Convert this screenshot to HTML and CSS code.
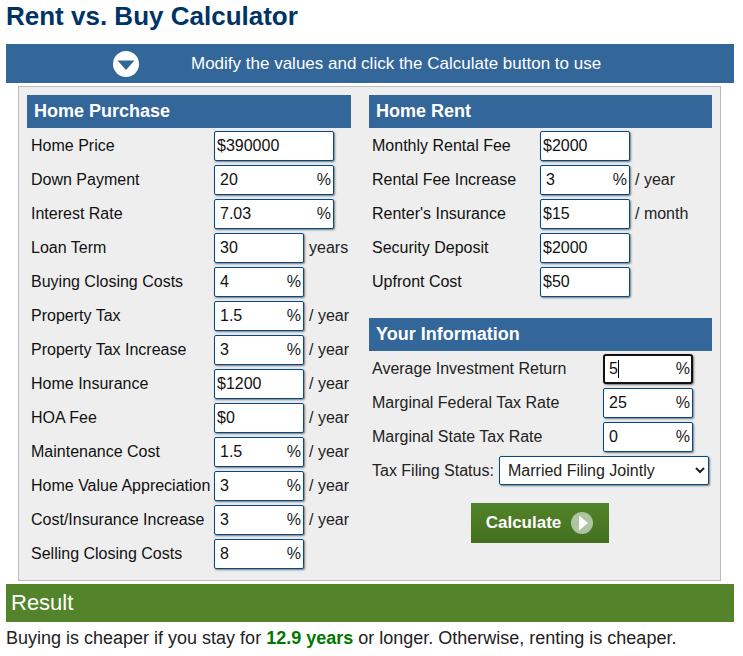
FILE: index.html
```html
<!DOCTYPE html>
<html lang="en">
<head>
<meta charset="utf-8">
<title>Rent vs. Buy Calculator</title>
<link rel="stylesheet" href="styles.css">
</head>
<body>
<h1 class="title">Rent vs. Buy Calculator</h1>
<div class="banner">
  <svg class="banner-icon" width="28" height="28" viewBox="0 0 28 28"><circle cx="14" cy="14" r="13" fill="#fff"/><path d="M5.5 10.5h17L14 20z" fill="#336699"/></svg>
  <span>Modify the values and click the Calculate button to use</span>
</div>
<form class="panel">
  <div class="col col-left">
    <h2 class="sec">Home Purchase</h2>
    <div class="row"><label class="lbl">Home Price</label><span class="field w120"><input value="$390000"></span></div>
    <div class="row"><label class="lbl">Down Payment</label><span class="field w120 pct"><input value="20"><i>%</i></span></div>
    <div class="row"><label class="lbl">Interest Rate</label><span class="field w120 pct"><input value="7.03"><i>%</i></span></div>
    <div class="row"><label class="lbl">Loan Term</label><span class="field w90 pct"><input value="30"></span><span class="unit">years</span></div>
    <div class="row"><label class="lbl">Buying Closing Costs</label><span class="field w90 pct"><input value="4"><i>%</i></span></div>
    <div class="row"><label class="lbl">Property Tax</label><span class="field w90 pct"><input value="1.5"><i>%</i></span><span class="unit">/ year</span></div>
    <div class="row"><label class="lbl">Property Tax Increase</label><span class="field w90 pct"><input value="3"><i>%</i></span><span class="unit">/ year</span></div>
    <div class="row"><label class="lbl">Home Insurance</label><span class="field w90"><input value="$1200"></span><span class="unit">/ year</span></div>
    <div class="row"><label class="lbl">HOA Fee</label><span class="field w90"><input value="$0"></span><span class="unit">/ year</span></div>
    <div class="row"><label class="lbl">Maintenance Cost</label><span class="field w90 pct"><input value="1.5"><i>%</i></span><span class="unit">/ year</span></div>
    <div class="row"><label class="lbl">Home Value Appreciation</label><span class="field w90 pct"><input value="3"><i>%</i></span><span class="unit">/ year</span></div>
    <div class="row"><label class="lbl">Cost/Insurance Increase</label><span class="field w90 pct"><input value="3"><i>%</i></span><span class="unit">/ year</span></div>
    <div class="row"><label class="lbl">Selling Closing Costs</label><span class="field w90 pct"><input value="8"><i>%</i></span></div>
  </div>
  <div class="col col-right">
    <h2 class="sec">Home Rent</h2>
    <div class="row rent"><label class="lbl">Monthly Rental Fee</label><span class="field w90"><input value="$2000"></span></div>
    <div class="row rent"><label class="lbl">Rental Fee Increase</label><span class="field w90 pct"><input value="3"><i>%</i></span><span class="unit">/ year</span></div>
    <div class="row rent"><label class="lbl">Renter's Insurance</label><span class="field w90"><input value="$15"></span><span class="unit">/ month</span></div>
    <div class="row rent"><label class="lbl">Security Deposit</label><span class="field w90"><input value="$2000"></span></div>
    <div class="row rent"><label class="lbl">Upfront Cost</label><span class="field w90"><input value="$50"></span></div>
    <h2 class="sec sec-info">Your Information</h2>
    <div class="row info"><label class="lbl">Average Investment Return</label><span class="field w90 pct focused"><input value="5"><b class="caret"></b><i>%</i></span></div>
    <div class="row info"><label class="lbl">Marginal Federal Tax Rate</label><span class="field w90 pct"><input value="25"><i>%</i></span></div>
    <div class="row info"><label class="lbl">Marginal State Tax Rate</label><span class="field w90 pct"><input value="0"><i>%</i></span></div>
    <div class="row status"><label class="lbl-status">Tax Filing Status:</label><select class="select"><option>Married Filing Jointly</option></select></div>
    <div class="actions">
      <button type="button" class="calc">Calculate
        <svg class="calc-icon" width="22" height="22" viewBox="0 0 22 22"><circle cx="11" cy="11" r="11" fill="#aec4a2"/><path d="M8 3.5 17 11l-9 7.5z" fill="#fff"/></svg>
      </button>
    </div>
  </div>
</form>
<div class="result-bar">Result</div>
<p class="result">Buying is cheaper if you stay for <strong>12.9 years</strong> or longer. Otherwise, renting is cheaper.</p>
</body>
</html>
```
FILE: styles.css
```css
* { box-sizing: border-box; }
html, body { margin: 0; padding: 0; }
body {
  width: 743px;
  height: 656px;
  overflow: hidden;
  padding: 0 9px 0 6px;
  font-family: "Liberation Sans", Arial, sans-serif;
  font-size: 16px;
  color: #000;
  background: #fff;
}
.title {
  margin: 0;
  height: 44px;
  padding-top: 1px;
  font-size: 26px;
  line-height: 30px;
  font-weight: 700;
  color: #003366;
}
.banner {
  height: 39px;
  margin-right: 0;
  background: #336699;
  color: #fff;
  font-size: 17px;
  display: flex;
  align-items: center;
  padding-left: 106px;
}
.banner-icon { margin-right: 51px; flex: none; }
.panel {
  margin: 3px 13px 3px 12px;
  height: 495px;
  width: 703px;
  border: 1px solid #bbb;
  background: #eee;
  padding: 8px 8px 0 8px;
  display: flex;
}
.col-left { width: 324px; flex: none; }
.col-right { width: 343px; flex: none; margin-left: 18px; }
.sec {
  margin: 0 0 3px;
  height: 33px;
  line-height: 32px;
  background: #336699;
  color: #fff;
  font-size: 18px;
  font-weight: 700;
  padding-left: 7px;
}
.sec-info { margin-top: 17px; }
.row {
  height: 34px;
  display: flex;
  align-items: flex-start;
  padding-left: 4px;
}
.col-right .row { padding-left: 3px; }
.lbl {
  width: 183px;
  flex: none;
  line-height: 30px;
  white-space: nowrap;
  color: #111;
}
.rent .lbl { width: 168px; }
.info .lbl { width: 231px; color: #222; }
.field {
  position: relative;
  display: block;
  height: 30px;
  flex: none;
  background: #fff;
  border: 1px solid #044a8b;
  border-radius: 2px;
  box-shadow: 1px 1px 2px #777;
}
.w120 { width: 120px; }
.w90 { width: 90px; }
.field input {
  display: block;
  width: 100%;
  height: 100%;
  border: 0;
  outline: 0;
  background: transparent;
  padding: 0 2px;
  font: inherit;
  color: #111;
}
.pct input { padding-left: 5px; }
.field i {
  position: absolute;
  right: 2px;
  top: 0;
  font-style: normal;
  line-height: 28px;
  color: #222;
}
.focused {
  border: 2px solid #111;
  border-radius: 3px;
}
.focused input { padding-left: 4px; }
.focused i { right: 1px; line-height: 26px; }
.caret {
  position: absolute;
  left: 13px;
  top: 4px;
  width: 1px;
  height: 18px;
  background: #000;
}
.unit {
  margin-left: 5px;
  line-height: 30px;
  white-space: nowrap;
  color: #222;
}
.status { height: 30px; }
.lbl-status { line-height: 30px; white-space: nowrap; color: #222; width: 127px; flex: none; }
.select {
  width: 210px;
  height: 29px;
  flex: none;
  background: #fff;
  border: 1px solid #044a8b;
  border-radius: 2px;
  box-shadow: 1px 1px 2px #777;
  font: inherit;
  color: #222;
  padding-left: 4px;
}
.actions {
  display: flex;
  justify-content: center;
  margin-top: 17px;
  padding-right: 2px;
}
.calc {
  width: 138px;
  height: 40px;
  border: 0;
  background: linear-gradient(#528329, #44701f);
  color: #fff;
  font: inherit;
  font-size: 17px;
  font-weight: 700;
  display: flex;
  align-items: center;
  justify-content: center;
  gap: 10px;
  padding: 0;
}
.calc-icon { flex: none; }
.result-bar {
  height: 38px;
  line-height: 37px;
  background: #53832a;
  color: #fff;
  font-size: 22px;
  padding-left: 5px;
}
.result {
  margin: 6px 0 0;
  font-size: 18px;
  line-height: 20px;
  color: #222;
  white-space: nowrap;
}
.result strong { color: #007700; }
```
